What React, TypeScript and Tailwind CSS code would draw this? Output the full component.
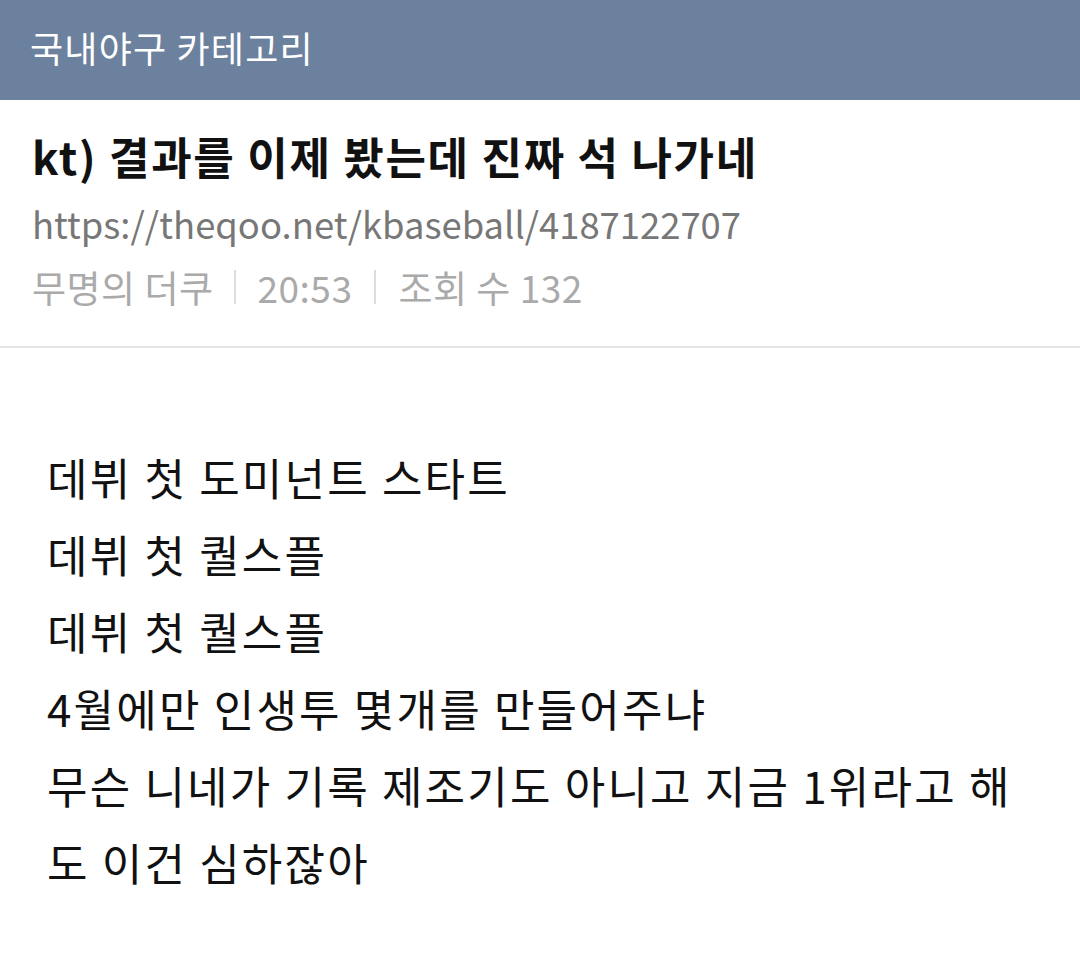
const bodyLines = [
  '데뷔 첫 도미넌트 스타트',
  '데뷔 첫 퀄스플',
  '데뷔 첫 퀄스플',
  '4월에만 인생투 몇개를 만들어주냐',
  '무슨 니네가 기록 제조기도 아니고 지금 1위라고 해',
  '도 이건 심하잖아',
]

export default function App() {
  return (
    <div className="min-h-[956px] w-[1080px] bg-white font-['Noto_Sans_CJK_KR','Noto_Sans',sans-serif]">
      <header className="flex h-[100px] items-center bg-[#6c819e] px-[30px] pb-[6px]">
        <h1 className="text-[36px] leading-none font-normal tracking-[1.2px] text-white">국내야구 카테고리</h1>
      </header>

      <section className="border-b-2 border-[#e4e4e4] px-[32px] pt-[30px] pb-[37px]">
        <h2 className="text-[44px] leading-[52px] font-bold tracking-[1.7px] text-[#111]">
          kt) 결과를 이제 봤는데 진짜 석 나가네
        </h2>
        <p className="mt-[19px] text-[36.4px] leading-[44px] text-[#777]">
          https://theqoo.net/kbaseball/4187122707
        </p>
        <div className="mt-[20px] flex items-center text-[37px] leading-[44px] tracking-[0.5px] text-[#aaa]">
          <span>무명의 더쿠</span>
          <span className="mr-[22px] ml-[20px] h-[34px] w-[2px] bg-[#ddd]" />
          <span>20:53</span>
          <span className="mx-[22px] h-[34px] w-[2px] bg-[#ddd]" />
          <span>조회 수 132</span>
        </div>
      </section>

      <article className="px-[47px] pt-[91px] text-[44px] leading-[77px] tracking-[2.2px] text-[#111]">
        {bodyLines.map((line, i) => (
          <p key={i}>{line}</p>
        ))}
      </article>
    </div>
  )
}
